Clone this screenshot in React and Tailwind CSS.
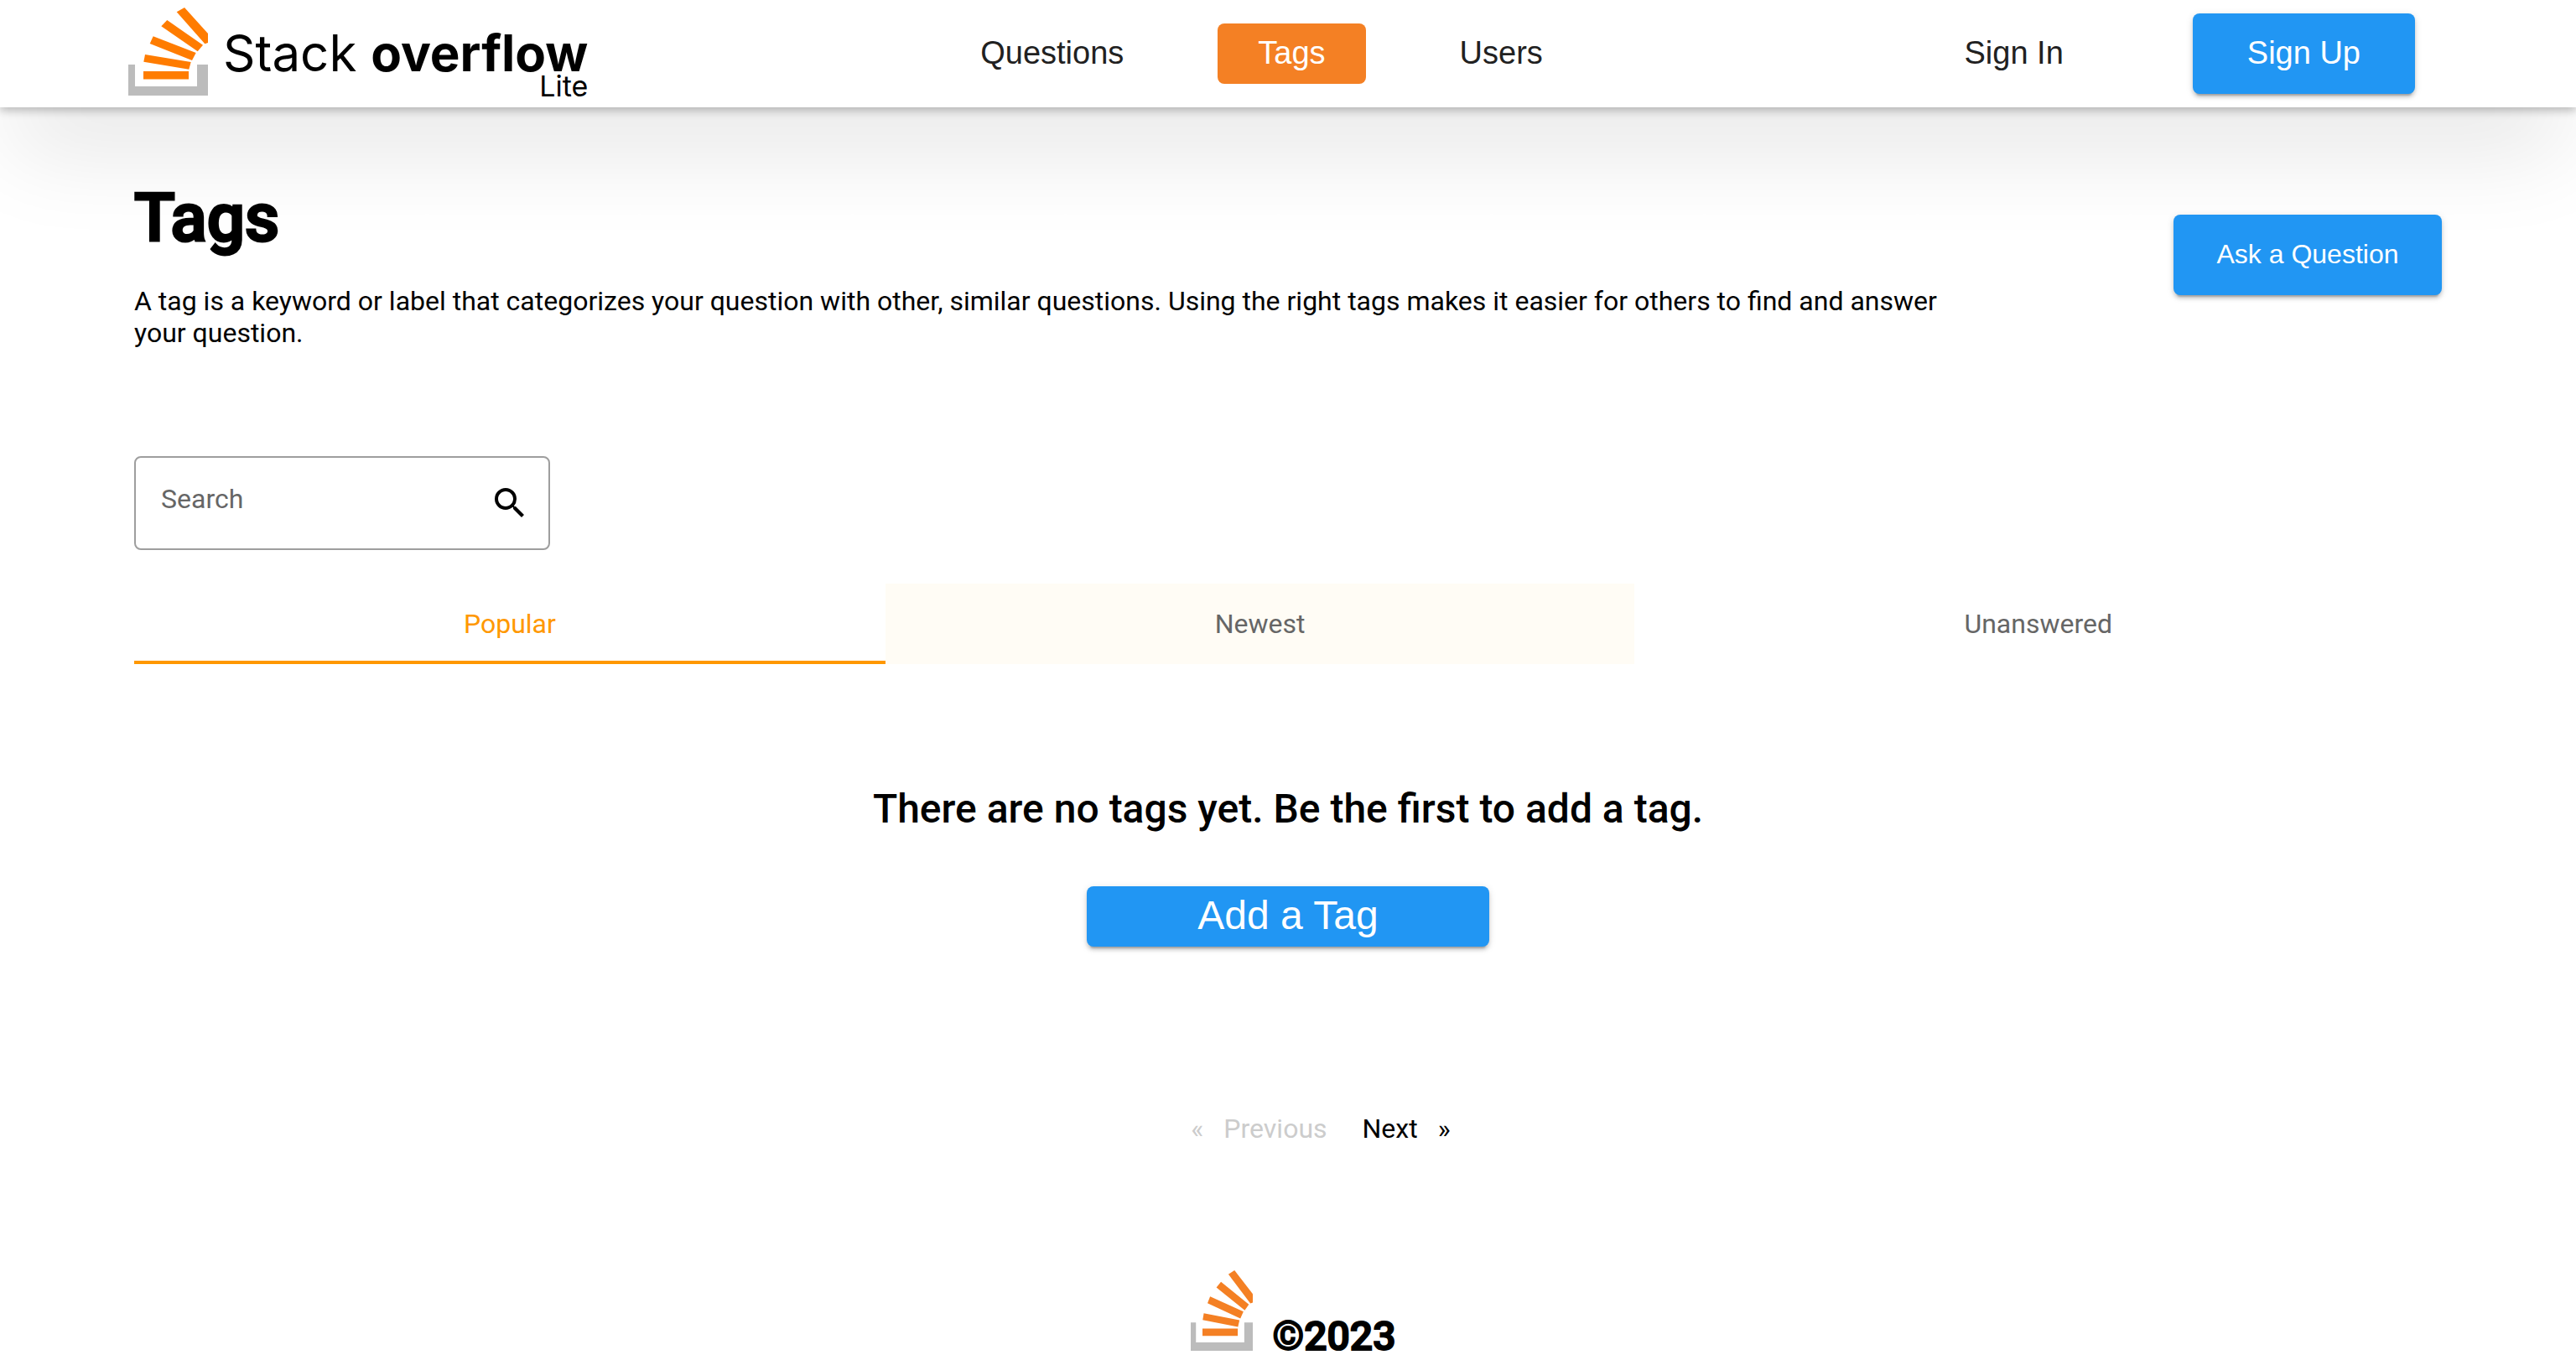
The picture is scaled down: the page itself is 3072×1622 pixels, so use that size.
const raised =
  "shadow-[0_6px_2px_-4px_rgba(0,0,0,0.2),0_4px_4px_0_rgba(0,0,0,0.14),0_2px_10px_0_rgba(0,0,0,0.12)]";

function StackMark({ className, bars }) {
  return (
    <svg viewBox="0 0 95 105" preserveAspectRatio="none" className={className} aria-hidden="true">
      <path d="M0 68h8v26h74V68h13v37H0z" fill="#bcbcbc" />
      <g fill={bars}>
        <path d="M18 76h54v9.500H18z" />
        <path d="M20 56l54.700 9-2.400 8.700-54-9z" />
        <path d="M29.700 34.300l51 19.700-4.700 9-50.300-20z" />
        <path d="M46.300 15L89 44.700l-6.300 7.600-43.400-30z" />
        <path d="M67 0l28 31v11l-3.700 1.300-33.600-38z" />
      </g>
    </svg>
  );
}

function NavItem({ label, active }) {
  return (
    <a
      href="#"
      className={
        active
          ? "flex h-[72px] items-center rounded-lg bg-[#f48024] px-12 pb-0.5 text-white"
          : "flex h-[72px] items-center rounded-lg px-12 pb-0.5 text-[#212121]"
      }
    >
      {label}
    </a>
  );
}

function Tab({ label, className }) {
  return (
    <button
      type="button"
      role="tab"
      className={`h-24 flex-auto border-b-4 pt-1 text-[32px] leading-[38px] ${className}`}
    >
      {label}
    </button>
  );
}

export default function App() {
  return (
    <div className="font-['Roboto',sans-serif] text-[32px] leading-[38px] text-black">
      <header className="grid h-32 grid-cols-[1fr_auto_1fr] items-center bg-white pr-48 pl-[153px] font-['Liberation_Sans',sans-serif] text-[38px] leading-[42px] shadow-[0_4px_10px_0_rgba(0,0,0,0.25),0_66px_110px_-14px_rgba(0,0,0,0.1)]">
        <a
          href="#"
          className="flex h-32 items-start gap-[18px] justify-self-start pt-[9px] font-['Inter',sans-serif]"
        >
          <StackMark className="h-[105px] w-[95px]" bars="#ff7c00" />
          <span className="flex flex-col items-end pt-7">
            <span className="text-[60px] leading-[52px]">
              Stack <b className="font-bold">overflow</b>
            </span>
            <span className="text-[34px] leading-[28px]">Lite</span>
          </span>
        </a>
        <nav className="flex gap-16 pr-6">
          <NavItem label="Questions" />
          <NavItem label="Tags" active />
          <NavItem label="Users" />
        </nav>
        <div className="flex items-center gap-[106px] justify-self-end">
          <NavItem label="Sign In" />
          <button type="button" className={`h-24 rounded-lg bg-[#2196f3] px-[65px] pb-0.5 text-white ${raised}`}>
            Sign Up
          </button>
        </div>
      </header>

      <main className="px-40 pt-20">
        <div className="flex items-start justify-between">
          <div className="w-4/5">
            <h1 className="pt-0.5 text-[80px] leading-[100px] font-medium [-webkit-text-stroke:3px_black]">Tags</h1>
            <p className="mt-[30px]">
              A tag is a keyword or label that categorizes your question with other, similar questions.
              Using the right tags makes it easier for others to find and answer your question.
            </p>
          </div>
          <button
            type="button"
            className={`mt-12 h-24 w-80 rounded-lg bg-[#2196f3] pb-0.5 font-['Liberation_Sans',sans-serif] text-white ${raised}`}
          >
            Ask a Question
          </button>
        </div>

        <form className="mt-32 flex h-28 w-[496px] items-center rounded-lg border-2 border-[#9e9e9e] px-[30px]">
          <input
            type="text"
            aria-label="Search"
            placeholder="Search"
            className="min-w-0 flex-1 pb-2.5 outline-none placeholder:text-[#666666]"
          />
          <button type="button" aria-label="Run search" className="-mr-2">
            <svg viewBox="0 0 24 24" className="size-12" fill="black" aria-hidden="true">
              <path d="M15.5 14h-.79l-.28-.27A6.471 6.471 0 0 0 16 9.5 6.5 6.5 0 1 0 9.500 16c1.610 0 3.090-.59 4.230-1.570l.27.28v.79l5 4.990L20.490 19l-4.990-5zm-6 0C7.010 14 5 11.990 5 9.500S7.010 5 9.500 5 14 7.010 14 9.500 11.990 14 9.500 14z" />
            </svg>
          </button>
        </form>

        <div role="tablist" className="mt-10 flex">
          <Tab label="Popular" className="border-[#ff9800] text-[#ff9800]" />
          <Tab label="Newest" className="border-[#fffcf5] bg-[#fffcf5] text-[#666666]" />
          <Tab label="Unanswered" className="border-transparent text-[#666666]" />
        </div>

        <section className="mt-36 flex flex-col items-center gap-[63px]">
          <h2 className="text-[48px] leading-[58px] font-medium">
            There are no tags yet. Be the first to add a tag.
          </h2>
          <button
            type="button"
            className={`h-[72px] w-[480px] rounded-lg bg-[#2196f3] pb-0.5 font-['Liberation_Sans',sans-serif] text-[48px] leading-[56px] text-white ${raised}`}
          >
            Add a Tag
          </button>
        </section>

        <div className="mt-[198px] flex justify-center gap-[42px] pl-[78px]">
          <button type="button" disabled className="flex gap-6 text-[#cccccc]">
            <span>«</span> Previous
          </button>
          <button type="button" className="flex gap-6">
            Next <span>»</span>
          </button>
        </div>
      </main>

      <footer className="mt-[150px] flex items-end justify-center gap-6 pb-[10px] pl-3">
        <StackMark className="h-24 w-[74px]" bars="#f48024" />
        <span className="text-[48px] leading-[34px] font-medium [-webkit-text-stroke:2px_black]">©2023</span>
      </footer>
    </div>
  );
}
